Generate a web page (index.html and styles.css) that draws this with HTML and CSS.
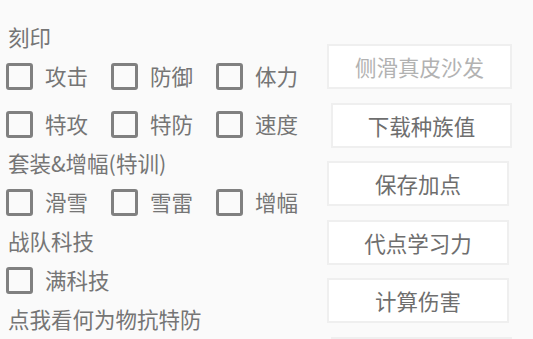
FILE: index.html
```html
<!DOCTYPE html>
<html>
<head>
<meta charset="utf-8">
<link rel="stylesheet" href="styles.css">
</head>
<body>
<div class="screen">
  <div class="left">
    <div class="label">刻印</div>
    <div class="row">
      <div class="check"><span class="box"></span><span class="ctext">攻击</span></div>
      <div class="check"><span class="box"></span><span class="ctext">防御</span></div>
      <div class="check"><span class="box"></span><span class="ctext">体力</span></div>
    </div>
    <div class="row row-gap">
      <div class="check"><span class="box"></span><span class="ctext">特攻</span></div>
      <div class="check"><span class="box"></span><span class="ctext">特防</span></div>
      <div class="check"><span class="box"></span><span class="ctext">速度</span></div>
    </div>
    <div class="label">套装&amp;增幅(特训)</div>
    <div class="row">
      <div class="check"><span class="box"></span><span class="ctext">滑雪</span></div>
      <div class="check"><span class="box"></span><span class="ctext">雪雷</span></div>
      <div class="check"><span class="box"></span><span class="ctext">增幅</span></div>
    </div>
    <div class="label">战队科技</div>
    <div class="row">
      <div class="check"><span class="box"></span><span class="ctext">满科技</span></div>
    </div>
    <div class="label">点我看何为物抗特防</div>
  </div>
  <div class="right">
    <div class="btn btn-a btn-disabled">侧滑真皮沙发</div>
    <div class="btn btn-b">下载种族值</div>
    <div class="btn btn-c">保存加点</div>
    <div class="btn btn-c">代点学习力</div>
    <div class="btn btn-c">计算伤害</div>
    <div class="btn btn-b"></div>
  </div>
</div>
</body>
</html>
```
FILE: styles.css
```css
html, body {
  margin: 0;
  padding: 0;
  background: #fafafa;
}
body {
  width: 533px;
  height: 339px;
  overflow: hidden;
  font-family: "Noto Sans CJK SC", "Noto Sans", sans-serif;
  font-size: 21.5px;
  color: #757575;
}
.screen {
  display: flex;
  height: 339px;
  overflow: hidden;
}
.left {
  width: 327px;
  padding-top: 17px;
  box-sizing: border-box;
  display: flex;
  flex-direction: column;
}
.label {
  height: 40px;
  line-height: 40px;
  padding-left: 8px;
  white-space: nowrap;
}
.row {
  height: 39px;
  display: flex;
  align-items: center;
  padding-left: 6px;
}
.row-gap {
  margin-top: 10px;
}
.check {
  width: 105px;
  display: flex;
  align-items: center;
}
.box {
  width: 27px;
  height: 27px;
  box-sizing: border-box;
  border: 3px solid #808080;
  border-radius: 3px;
  flex: none;
}
.ctext {
  margin-left: 12px;
  line-height: 30px;
}
.right {
  flex: 1;
  padding-top: 44px;
  display: flex;
  flex-direction: column;
  gap: 13.5px;
}
.btn {
  height: 45px;
  flex: none;
  box-sizing: border-box;
  background: #ffffff;
  border: 2px solid #efefef;
  display: flex;
  align-items: center;
  justify-content: center;
  color: #6e6e6e;
  white-space: nowrap;
}
.btn-a {
  width: 185px;
}
.btn-b {
  width: 181px;
  margin-left: 4px;
}
.btn-c {
  width: 182px;
}
.btn-disabled {
  color: #b2b2b2;
}
```
